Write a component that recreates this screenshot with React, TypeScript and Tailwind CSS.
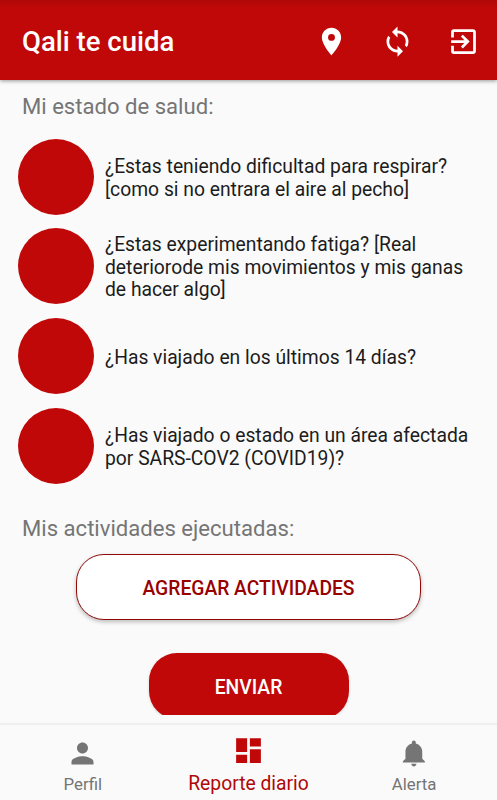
import { MdDashboard, MdExitToApp, MdLocationOn, MdPerson, MdSync } from 'react-icons/md';

const questions = [
  ['¿Estas teniendo dificultad para respirar?', '[como si no entrara el aire al pecho]'],
  ['¿Estas experimentando fatiga? [Real', 'deteriorode mis movimientos y mis ganas', 'de hacer algo]'],
  ['¿Has viajado en los últimos 14 días?'],
  ['¿Has viajado o estado en un área afectada', 'por SARS-COV2 (COVID19)?'],
];

function BellIcon() {
  return (
    <svg viewBox="0 0 24 24" fill="currentColor" className="h-[33px] w-[31px]">
      <path d="M11.5 22c1.1 0 2-.9 2-2h-4c0 1.1.9 2 2 2zm6.5-6v-5.5c0-3.07-2.13-5.64-5-6.32V3.5c0-.83-.67-1.5-1.5-1.5S10 2.67 10 3.5v.68c-2.87.68-5 3.25-5 6.32V16l-2 2v1h17v-1l-2-2z" />
    </svg>
  );
}

export default function App() {
  return (
    <div className="flex h-[800px] w-[497px] flex-col overflow-hidden bg-[#fafafa] font-[Roboto,sans-serif] text-[#1c1c1c]">
      <header className="z-10 flex h-[79.5px] shrink-0 items-center bg-linear-to-b from-[#b00808] to-[#c00808] to-10% pt-[3px] pr-[17px] pl-[22px] text-white shadow-[0_1px_4px_rgba(0,0,0,0.4)]">
        <h1 className="flex-1 pt-px text-[27.5px] font-medium">Qali te cuida</h1>
        <div className="flex items-center gap-[33px]">
          <MdLocationOn size={33} />
          <MdSync size={33} />
          <MdExitToApp size={33} />
        </div>
      </header>

      <main className="flex h-[635.5px] shrink-0 flex-col overflow-hidden">
        <h2 className="mt-[10px] pl-[22px] text-[22.1px] leading-[32px] text-[#757575]">Mi estado de salud:</h2>
        <ul className="mt-[17px] flex flex-col gap-[13.7px] pl-[18px]">
          {questions.map((lines) => (
            <li key={lines[0]} className="flex h-[76px] items-center gap-[11px]">
              <span className="size-[76px] shrink-0 rounded-full bg-[#c00808]" />
              <p className="pt-[4px] text-[19.3px] leading-[22.5px] whitespace-nowrap">
                {lines.map((line) => (
                  <span key={line} className="block">{line}</span>
                ))}
              </p>
            </li>
          ))}
        </ul>
        <h2 className="mt-[28px] pl-[22px] text-[22.1px] leading-[32px] text-[#757575]">Mis actividades ejecutadas:</h2>
        <button className="mx-auto mt-[10.5px] h-[66px] w-[345px] shrink-0 rounded-[28px] border border-[#900808] bg-white pt-[4px] text-[19.3px] font-medium text-[#980000] shadow-[0_2px_4px_rgba(0,0,0,0.25)]">
          AGREGAR ACTIVIDADES
        </button>
        <button className="mx-auto mt-[33px] h-[66px] w-[200px] shrink-0 rounded-[28px] bg-[#c00808] pt-[4px] text-[19.3px] font-medium text-white shadow-[0_1px_3px_rgba(0,0,0,0.15)]">
          ENVIAR
        </button>
      </main>

      <nav className="mt-[8px] grid h-[77px] shrink-0 grid-cols-3 border-t-2 border-[#f0f0f0] bg-[#fafafa] text-[#757575]">
        <div className="flex flex-col items-center pt-[12px]">
          <MdPerson size={33} />
          <span className="text-[16.8px] leading-[28px]">Perfil</span>
        </div>
        <div className="flex flex-col items-center pt-[9px] text-[#b00808]">
          <MdDashboard size={33} className="text-[#c00808]" />
          <span className="text-[19.3px] leading-[34px]">Reporte diario</span>
        </div>
        <div className="flex flex-col items-center pt-[12px]">
          <BellIcon />
          <span className="text-[16.8px] leading-[28px]">Alerta</span>
        </div>
      </nav>
    </div>
  );
}
